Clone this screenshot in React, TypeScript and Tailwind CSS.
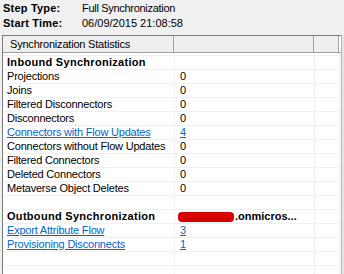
import React from "react";

type Row = { label: string; value?: string; bold?: boolean; link?: boolean; redacted?: boolean };

const rows: Row[] = [
  { label: "Inbound Synchronization", bold: true },
  { label: "Projections", value: "0" },
  { label: "Joins", value: "0" },
  { label: "Filtered Disconnectors", value: "0" },
  { label: "Disconnectors", value: "0" },
  { label: "Connectors with Flow Updates", value: "4", link: true },
  { label: "Connectors without Flow Updates", value: "0" },
  { label: "Filtered Connectors", value: "0" },
  { label: "Deleted Connectors", value: "0" },
  { label: "Metaverse Object Deletes", value: "0" },
  { label: "" },
  { label: "Outbound Synchronization", value: ".onmicros...", bold: true, redacted: true },
  { label: "Export Attribute Flow", value: "3", link: true },
  { label: "Provisioning Disconnects", value: "1", link: true },
  { label: "" },
  { label: "" },
];

const GridRow = ({ row, h = "h-[14px]" }: { row?: Row; h?: string }) => {
  const text = row?.link ? "text-[#0066cc] underline" : "text-black";
  const weight = row?.bold ? "font-bold tracking-[0.3px]" : "tracking-[-0.2px]";
  return (
    <div className={`flex ${h} border-b border-[#f0f0f0] leading-[13px] whitespace-nowrap`}>
      <div className={`w-[172px] pl-[4px] border-r border-[#f0f0f0] overflow-hidden ${text} ${weight}`}>
        {row?.label}
      </div>
      <div className={`w-[140px] pl-[5px] border-r border-[#f0f0f0] overflow-hidden flex items-center ${text} ${row?.bold ? "font-bold" : ""}`}>
        {row?.redacted && (
          <span className="inline-block w-[56px] h-[10px] -ml-[2px] mr-px rounded-[4px] bg-[#d70000]" />
        )}
        {row?.value}
      </div>
      <div className="w-[25px] border-r border-[#f0f0f0]" />
    </div>
  );
};

export default function App() {
  return (
    <div className="w-[344px] h-[274px] overflow-hidden bg-[#f0f0f0] text-[11px] text-black font-['Liberation_Sans',Arial,sans-serif]">
      {/* Step info */}
      <div className="pl-[3px] pt-[1px] grid grid-cols-[79px_1fr] leading-[15px]">
        <span className="font-bold tracking-[0.2px]">Step Type:</span>
        <span className="tracking-[-0.3px]">Full Synchronization</span>
        <span className="font-bold tracking-[0.2px]">Start Time:</span>
        <span>06/09/2015 21:08:58</span>
      </div>

      {/* Statistics list */}
      <div className="mt-[4px] ml-[2px] w-[342px] h-[240px] flex">
        <div className="flex-1 bg-white border-l border-t border-[#7a7a7a]">
          <div className="flex h-[17px] leading-[16px] border-b border-[#a0a0a0] bg-white">
            <div className="w-[171px] pl-[7px] tracking-[-0.2px] bg-[#efefef] border-r border-[#a0a0a0]">
              Synchronization Statistics
            </div>
            <div className="w-[140px] bg-[#efefef] border-r border-[#a0a0a0]" />
            <div className="w-[25px] bg-[#efefef] border-r border-[#a0a0a0]" />
          </div>
          <GridRow h="h-[3px]" />
          {rows.map((r, i) => (
            <GridRow key={i} row={r} />
          ))}
        </div>
        <div className="w-[3px] border-l border-[#b4b4b4] bg-[#e6e6e6]" />
      </div>
    </div>
  );
}
